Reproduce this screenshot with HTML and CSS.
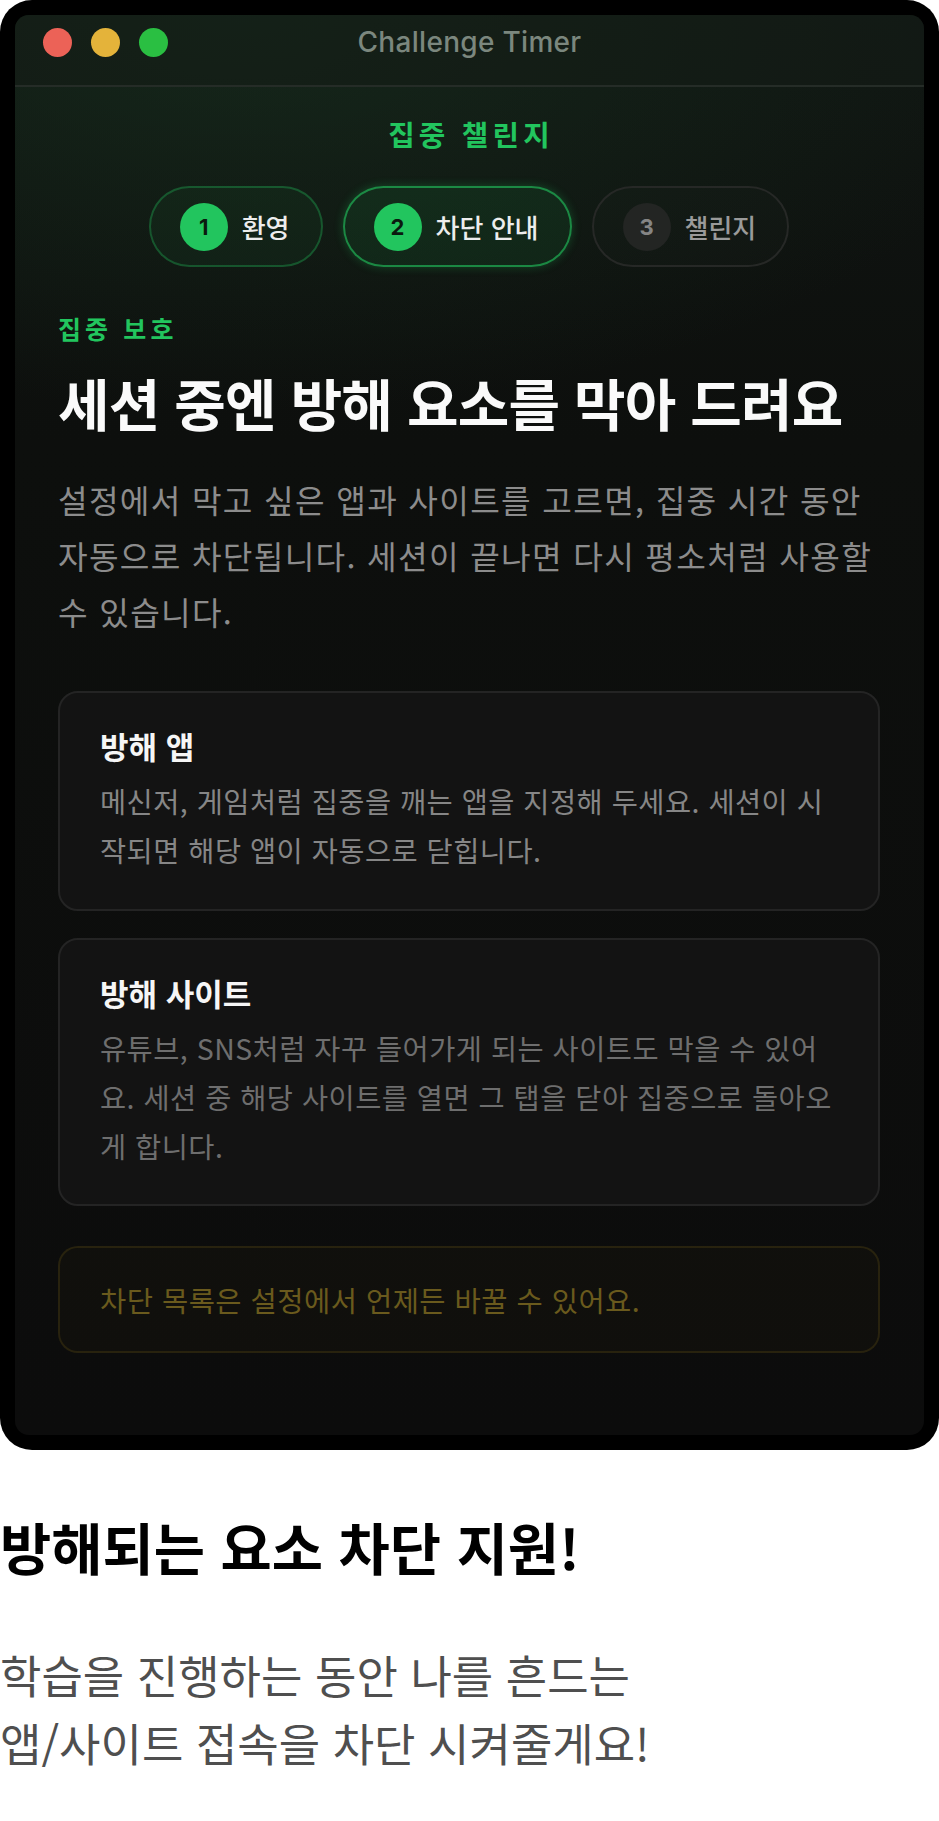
FILE: index.html
```html
<!DOCTYPE html>
<html lang="ko">
<head>
<meta charset="utf-8">
<title>Challenge Timer</title>
<link rel="stylesheet" href="styles.css">
</head>
<body>
<div class="device">
  <div class="window">
    <header class="titlebar">
      <div class="lights">
        <span class="light red"></span>
        <span class="light yellow"></span>
        <span class="light green"></span>
      </div>
      <div class="wtitle">Challenge Timer</div>
      <div></div>
    </header>
    <main class="content">
      <div class="brand">집중 챌린지</div>
      <nav class="steps">
        <div class="step done"><span class="num">1</span><span class="step-label">환영</span></div>
        <div class="step active"><span class="num">2</span><span class="step-label">차단 안내</span></div>
        <div class="step todo"><span class="num">3</span><span class="step-label">챌린지</span></div>
      </nav>
      <div class="eyebrow">집중 보호</div>
      <h1 class="headline">세션 중엔 방해 요소를 막아 드려요</h1>
      <p class="lead">설정에서 막고 싶은 앱과 사이트를 고르면, 집중 시간 동안<br>자동으로 차단됩니다. 세션이 끝나면 다시 평소처럼 사용할<br>수 있습니다.</p>
      <section class="card">
        <h3 class="card-title">방해 앱</h3>
        <p class="card-body">메신저, 게임처럼 집중을 깨는 앱을 지정해 두세요. 세션이 시<br>작되면 해당 앱이 자동으로 닫힙니다.</p>
      </section>
      <section class="card card-second">
        <h3 class="card-title">방해 사이트</h3>
        <p class="card-body">유튜브, SNS처럼 자꾸 들어가게 되는 사이트도 막을 수 있어<br>요. 세션 중 해당 사이트를 열면 그 탭을 닫아 집중으로 돌아오<br>게 합니다.</p>
      </section>
      <div class="note">차단 목록은 설정에서 언제든 바꿀 수 있어요.</div>
    </main>
  </div>
</div>
<section class="promo">
  <h2 class="promo-title">방해되는 요소 차단 지원!</h2>
  <p class="promo-text">학습을 진행하는 동안 나를 흔드는<br>앱/사이트 접속을 차단 시켜줄게요!</p>
</section>
</body>
</html>
```
FILE: styles.css
```css
* { box-sizing: border-box; margin: 0; padding: 0; }

body {
  margin: 0;
  width: 939px;
  background: #ffffff;
  font-family: "Noto Sans CJK KR", "Noto Sans", sans-serif;
}

.device {
  background: #000;
  border-radius: 32px;
  padding: 15px;
}

.window {
  border-radius: 14px;
  overflow: hidden;
  background:
    radial-gradient(ellipse 90% 28% at 25% 0%, rgba(28, 62, 38, 0.45), rgba(28, 62, 38, 0) 100%),
    linear-gradient(180deg, #101512 0%, #0d0f0d 30%, #0c0c0c 100%);
}

.titlebar {
  height: 72px;
  padding: 0 28px 16px 28px;
  border-bottom: 2px solid #252c27;
  display: grid;
  grid-template-columns: 1fr auto 1fr;
  align-items: center;
  background: rgba(20, 28, 22, 0.55);
}

.lights { display: flex; gap: 19px; }
.light { width: 29px; height: 29px; border-radius: 50%; display: block; }
.red { background: #ec6257; }
.yellow { background: #e4b33a; }
.green { background: #2abf42; }

.wtitle {
  font-family: "Inter", "Noto Sans", sans-serif;
  font-size: 28px;
  font-weight: 500;
  letter-spacing: 0.3px;
  color: #7b877e;
}

.content {
  padding: 29px 44px 82px 43px;
}

.brand {
  text-align: center;
  font-size: 28.8px;
  font-weight: 700;
  line-height: 36px;
  letter-spacing: 4.2px;
  padding-left: 4px;
  color: #22c55e;
}

.steps {
  margin-top: 34px;
  display: flex;
  justify-content: center;
  gap: 20px;
}

.step {
  height: 81px;
  display: flex;
  align-items: center;
  gap: 14px;
  padding: 0 31px 0 29px;
  border-radius: 41px;
  border: 2px solid #2a2a2a;
}

.num {
  width: 48px;
  height: 48px;
  border-radius: 50%;
  display: flex;
  align-items: center;
  justify-content: center;
  font-family: "Inter", "Noto Sans", sans-serif;
  font-size: 22px;
  font-weight: 700;
}

.step-label {
  font-size: 26px;
  font-weight: 500;
  line-height: 36px;
}

.step.done {
  border-color: rgba(34, 197, 94, 0.32);
  background: rgba(34, 197, 94, 0.05);
}
.step.active {
  border-color: rgba(34, 197, 94, 0.62);
  background: rgba(34, 197, 94, 0.09);
  box-shadow: 0 0 10px rgba(34, 197, 94, 0.28);
}
.step.done .num, .step.active .num { background: #22c55e; color: #0a1a0f; }
.step.done .step-label, .step.active .step-label { color: #ededed; }

.step.todo {
  border-color: #262826;
  background: rgba(255, 255, 255, 0.01);
}
.step.todo .num { background: #232523; color: #858585; }
.step.todo .step-label { color: #9a9a9a; }

.eyebrow {
  margin-top: 44px;
  font-size: 25px;
  font-weight: 600;
  line-height: 34px;
  letter-spacing: 4.1px;
  color: #22c55e;
}

.headline {
  margin-top: 25px;
  font-size: 56px;
  font-weight: 700;
  line-height: 64px;
  letter-spacing: -0.8px;
  color: #fafafa;
}

.lead {
  margin-top: 37px;
  font-size: 32.2px;
  line-height: 56px;
  letter-spacing: 1.3px;
  color: #8c8c8c;
  white-space: nowrap;
}

.card {
  margin-top: 52px;
  background: #131313;
  border: 2px solid #242424;
  border-radius: 20px;
  padding: 33px 30px 35px 40px;
}

.card-second {
  margin-top: 27px;
  padding-bottom: 34px;
}

.card-title {
  font-size: 31px;
  font-weight: 700;
  line-height: 40px;
  color: #f6f6f6;
}

.card-body {
  margin-top: 10px;
  font-size: 28.4px;
  line-height: 49px;
  letter-spacing: 0.5px;
  color: #868686;
  white-space: nowrap;
}

.card-second .card-body { color: #6e6e6e; }

.note {
  margin-top: 40px;
  border: 2px solid rgba(202, 160, 30, 0.13);
  background: rgba(202, 160, 30, 0.025);
  border-radius: 20px;
  padding: 27px 30px 27px 40px;
  font-size: 28.5px;
  line-height: 49px;
  letter-spacing: 0.5px;
  color: #6a5a1d;
}

.promo {
  padding-bottom: 40px;
}

.promo-title {
  margin-top: 65px;
  font-size: 55.7px;
  font-weight: 700;
  line-height: 62px;
  color: #000;
}

.promo-text {
  margin-top: 64px;
  font-size: 45px;
  line-height: 68px;
  color: #4f4f4f;
}
```
